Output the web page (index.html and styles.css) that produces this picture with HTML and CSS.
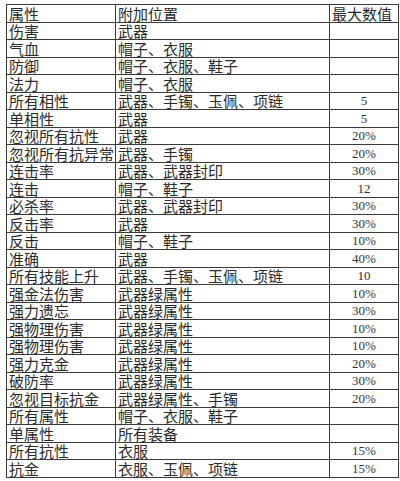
FILE: index.html
```html
<!DOCTYPE html>
<html lang="zh">
<head>
<meta charset="utf-8">
<link rel="stylesheet" href="styles.css">
</head>
<body>
<table class="attr-table">
<colgroup><col class="c1"><col class="c2"><col class="c3"></colgroup>
<tbody>
<tr><td>属性</td><td>附加位置</td><td class="head-num">最大数值</td></tr>
<tr><td>伤害</td><td>武器</td><td class="num"></td></tr>
<tr><td>气血</td><td>帽子、衣服</td><td class="num"></td></tr>
<tr><td>防御</td><td>帽子、衣服、鞋子</td><td class="num"></td></tr>
<tr><td>法力</td><td>帽子、衣服</td><td class="num"></td></tr>
<tr><td>所有相性</td><td>武器、手镯、玉佩、项链</td><td class="num">5</td></tr>
<tr><td>单相性</td><td>武器</td><td class="num">5</td></tr>
<tr><td>忽视所有抗性</td><td>武器</td><td class="num">20%</td></tr>
<tr><td>忽视所有抗异常</td><td>武器、手镯</td><td class="num">20%</td></tr>
<tr><td>连击率</td><td>武器、武器封印</td><td class="num">30%</td></tr>
<tr><td>连击</td><td>帽子、鞋子</td><td class="num">12</td></tr>
<tr><td>必杀率</td><td>武器、武器封印</td><td class="num">30%</td></tr>
<tr><td>反击率</td><td>武器</td><td class="num">30%</td></tr>
<tr><td>反击</td><td>帽子、鞋子</td><td class="num">10%</td></tr>
<tr><td>准确</td><td>武器</td><td class="num">40%</td></tr>
<tr><td>所有技能上升</td><td>武器、手镯、玉佩、项链</td><td class="num">10</td></tr>
<tr><td>强金法伤害</td><td>武器绿属性</td><td class="num">10%</td></tr>
<tr><td>强力遗忘</td><td>武器绿属性</td><td class="num">30%</td></tr>
<tr><td>强物理伤害</td><td>武器绿属性</td><td class="num">10%</td></tr>
<tr><td>强物理伤害</td><td>武器绿属性</td><td class="num">10%</td></tr>
<tr><td>强力克金</td><td>武器绿属性</td><td class="num">20%</td></tr>
<tr><td>破防率</td><td>武器绿属性</td><td class="num">30%</td></tr>
<tr><td>忽视目标抗金</td><td>武器绿属性、手镯</td><td class="num">20%</td></tr>
<tr><td>所有属性</td><td>帽子、衣服、鞋子</td><td class="num"></td></tr>
<tr><td>单属性</td><td>所有装备</td><td class="num"></td></tr>
<tr><td>所有抗性</td><td>衣服</td><td class="num">15%</td></tr>
<tr><td>抗金</td><td>衣服、玉佩、项链</td><td class="num">15%</td></tr>
</tbody>
</table>
</body>
</html>
```
FILE: styles.css
```css
html, body {
  margin: 0;
  padding: 0;
  background: #ffffff;
}
body {
  padding: 4px 0 0 6px;
  font-family: "Noto Sans CJK SC", "Noto Sans", sans-serif;
  color: #2a2a2a;
}
.attr-table {
  border-collapse: collapse;
  table-layout: fixed;
  width: 392px;
}
.c1 { width: 109px; }
.c2 { width: 214px; }
.c3 { width: 69px; }
.attr-table td {
  border: 1px solid #3a3a3a;
  height: 16.5px;
  padding: 0 0 0 2px;
  font-size: 15px;
  line-height: 16px;
  white-space: nowrap;
  vertical-align: bottom;
}
.attr-table td:nth-child(2),
.attr-table td:nth-child(3) {
  border-left: 1px solid #222;
}
.attr-table .num {
  text-align: center;
  padding: 0;
  font-family: "Liberation Serif", "DejaVu Serif", serif;
  font-size: 13px;
  color: #333;
}
.attr-table .head-num {
  padding-left: 2px;
}
```
